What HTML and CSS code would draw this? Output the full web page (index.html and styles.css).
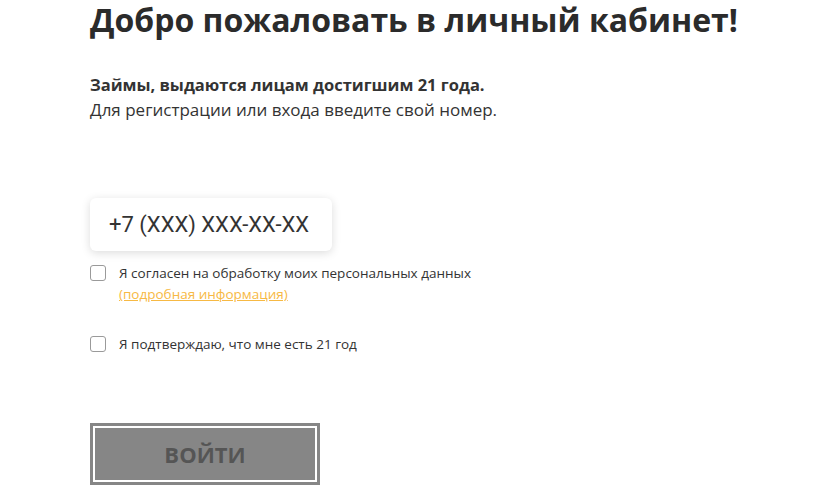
FILE: index.html
```html
<!DOCTYPE html>
<html lang="ru">
<head>
<meta charset="utf-8">
<link rel="stylesheet" href="styles.css">
</head>
<body>
<main class="page">
  <h1 class="title">Добро пожаловать в личный кабинет!</h1>
  <p class="lead"><strong>Займы, выдаются лицам достигшим 21 года.</strong><br>Для регистрации или входа введите свой номер.</p>
  <div class="phone">+7 (XXX) XXX-XX-XX</div>
  <label class="check">
    <span class="box"></span>
    <span class="text">Я согласен на обработку моих персональных данных<br><a href="#" class="link">(подробная информация)</a></span>
  </label>
  <label class="check check-second">
    <span class="box"></span>
    <span class="text">Я подтверждаю, что мне есть 21 год</span>
  </label>
  <button class="submit" type="button"><span class="submit-inner">ВОЙТИ</span></button>
</main>
</body>
</html>
```
FILE: styles.css
```css
html, body {
  margin: 0;
  padding: 0;
  background: #fff;
}
body {
  font-family: "Open Sans", "Noto Sans", sans-serif;
  color: #333;
}
.page {
  padding-left: 90px;
  display: flex;
  flex-direction: column;
  align-items: flex-start;
}
.title {
  margin: 0;
  font-size: 32px;
  line-height: 40px;
  font-weight: 700;
  color: #2b2b2b;
  white-space: nowrap;
}
.lead {
  margin: 32px 0 0 0;
  font-size: 17px;
  line-height: 25px;
  color: #333;
}
.lead strong {
  font-size: 16.5px;
  font-weight: 700;
}
.phone {
  margin-top: 76px;
  width: 242px;
  height: 53px;
  box-sizing: border-box;
  padding-left: 19px;
  display: flex;
  align-items: center;
  font-family: Roboto, "Liberation Sans", sans-serif;
  font-size: 22px;
  color: #333;
  background: #fff;
  border-radius: 6px;
  box-shadow: 0 2px 10px rgba(0, 0, 0, 0.14);
}
.check {
  display: flex;
  align-items: flex-start;
  margin-top: 14px;
  gap: 13px;
}
.check-second {
  margin-top: 31px;
}
.box {
  flex: none;
  width: 16px;
  height: 16px;
  box-sizing: border-box;
  border: 1px solid #9a9a9a;
  border-radius: 3px;
  background: #fff;
}
.text {
  font-size: 13.5px;
  line-height: 21px;
  color: #333;
  margin-top: -2px;
}
.link {
  color: #f7b944;
  text-decoration: underline;
}
.submit {
  margin-top: 68px;
  width: 230px;
  height: 62px;
  padding: 0;
  border: 3px solid #868686;
  background: #fff;
  font: inherit;
}
.submit-inner {
  display: flex;
  align-items: center;
  justify-content: center;
  width: calc(100% - 4px);
  height: calc(100% - 4px);
  margin: 2px;
  background: #868686;
  color: #555;
  font-size: 22px;
  font-weight: 700;
}
```
